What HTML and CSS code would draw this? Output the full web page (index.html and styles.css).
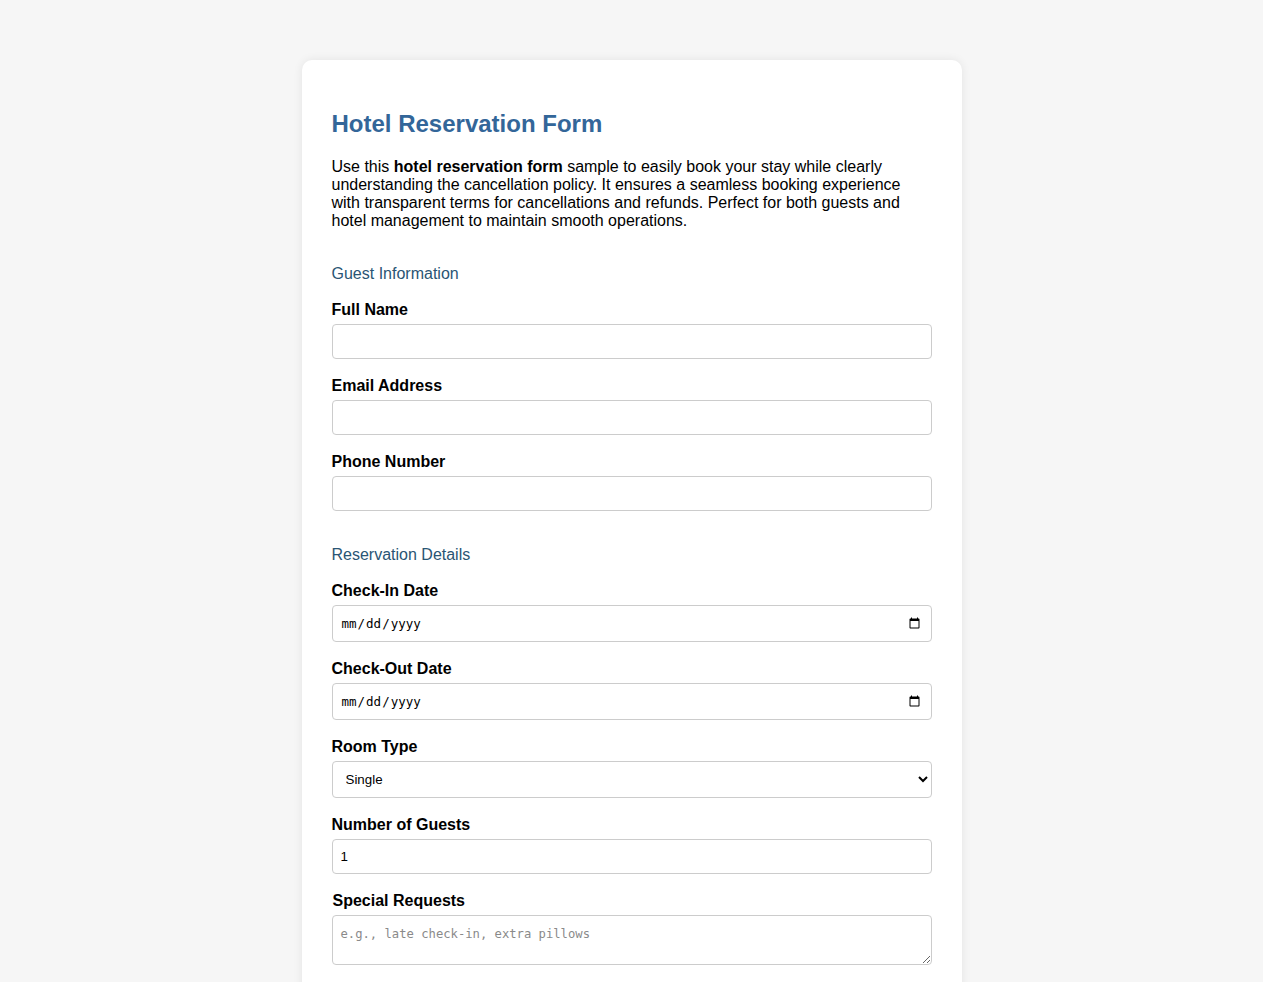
FILE: index.html
```html
<!DOCTYPE html>
<html lang="en">
<head>
<meta charset="utf-8">
<title>Hotel Reservation Form</title>
<link rel="stylesheet" href="styles.css">
</head>
<body>
<div class="card">
  <h1 class="title">Hotel Reservation Form</h1>
  <p class="intro">Use this <strong>hotel reservation form</strong> sample to easily book your stay while clearly understanding the cancellation policy. It ensures a seamless booking experience with transparent terms for cancellations and refunds. Perfect for both guests and hotel management to maintain smooth operations.</p>

  <form>
    <h3 class="section">Guest Information</h3>
    <label class="label" for="name">Full Name</label>
    <input class="field" id="name" type="text">
    <label class="label" for="email">Email Address</label>
    <input class="field" id="email" type="email">
    <label class="label" for="phone">Phone Number</label>
    <input class="field" id="phone" type="tel">

    <h3 class="section">Reservation Details</h3>
    <label class="label" for="in">Check-In Date</label>
    <input class="field date" id="in" type="date">
    <label class="label" for="out">Check-Out Date</label>
    <input class="field date" id="out" type="date">
    <label class="label" for="room">Room Type</label>
    <select class="field select" id="room">
      <option>Single</option>
      <option>Double</option>
      <option>Suite</option>
    </select>
    <label class="label" for="guests">Number of Guests</label>
    <input class="field" id="guests" type="number" value="1" min="1">
    <label class="label special" for="req">Special Requests</label>
    <textarea class="field area" id="req" placeholder="e.g., late check-in, extra pillows"></textarea>
  </form>
</div>
</body>
</html>
```

FILE: styles.css
```css
html, body {
  margin: 0;
  padding: 0;
}
body {
  background: #f6f6f6;
  font-family: "Liberation Sans", Arial, sans-serif;
  color: #000;
}
.card {
  width: 600px;
  margin: 60px auto 40px;
  padding: 30px;
  background: #fff;
  border-radius: 10px;
  box-shadow: 0 0 10px rgba(0, 0, 0, 0.08);
}
.title {
  margin: 20px 0 20px;
  font-size: 24px;
  line-height: 28px;
  font-weight: bold;
  color: #336699;
}
.intro {
  margin: 0 0 35px;
  font-size: 16px;
  line-height: 18px;
}
.section {
  margin: 35px 0 18px;
  padding: 0;
  font-size: 16px;
  line-height: 18px;
  font-weight: normal;
  color: #2a5574;
}
.label {
  display: block;
  margin: 0 0 5px;
  font-size: 16px;
  line-height: 18px;
  font-weight: bold;
}
.special {
  padding-left: 1px;
}
.field {
  display: block;
  box-sizing: border-box;
  width: 100%;
  height: 35px;
  margin: 0 0 18px;
  padding: 8px;
  border: 1px solid #ccc;
  border-radius: 4px;
  background: #fff;
  font-family: "Liberation Sans", Arial, sans-serif;
  font-size: 13.33px;
  color: #000;
}
.date {
  height: 37px;
  font-family: "DejaVu Sans Mono", "Liberation Mono", monospace;
  font-size: 12.5px;
}
.select {
  height: 37px;
  padding: 8px 8px 8px 9px;
}
.area {
  height: 50px;
  padding-top: 11px;
  font-family: "DejaVu Sans Mono", "Liberation Mono", monospace;
  font-size: 12.2px;
  resize: vertical;
}
.area::placeholder {
  color: #8a8a8a;
}
```
